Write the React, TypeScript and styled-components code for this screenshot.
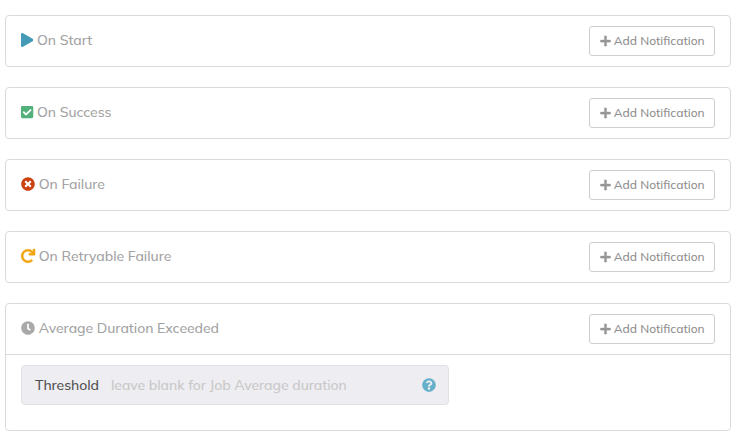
import React from "react";
import styled, { createGlobalStyle } from "styled-components";
import {
  FaPlay,
  FaCheckSquare,
  FaTimesCircle,
  FaRedo,
  FaClock,
  FaPlus,
  FaQuestionCircle,
} from "react-icons/fa";
import type { IconType } from "react-icons";

const GlobalStyle = createGlobalStyle`
  *, *::before, *::after { box-sizing: border-box; }
  body {
    margin: 0;
    background: #fff;
    font-family: Muli, Mulish, Lato, sans-serif;
    font-size: 14px;
    font-weight: 500;
    line-height: 20px;
  }
`;

const Page = styled.main`
  display: flex;
  flex-direction: column;
  gap: 20px;
  width: 740px;
  padding: 15px 9px 17px 5px;
`;

const Panel = styled.section`
  border: 1px solid #dadada;
  border-radius: 4px;
`;

const PanelHeader = styled.header`
  display: flex;
  align-items: center;
  justify-content: space-between;
  height: 50px;
  padding: 0 15px;
`;

const Title = styled.div<{ $color: string; $iconWidth: number; $iconStroke: number }>`
  display: flex;
  align-items: center;
  gap: 3.75px;
  padding-bottom: 2px;
  color: #a3a3a3;
  letter-spacing: -0.04px;
  svg {
    width: ${(p) => p.$iconWidth}px;
    height: 14px;
    color: ${(p) => p.$color};
    stroke: currentColor;
    stroke-width: ${(p) => p.$iconStroke}px;
    overflow: visible;
  }
`;

const Label = styled.span`
  white-space: nowrap;
`;

const AddButton = styled.button`
  display: flex;
  align-items: center;
  gap: 2.75px;
  width: 126px;
  height: 30px;
  padding: 0 0 0 10px;
  border: 1px solid #cfcfca;
  border-radius: 3px;
  background: #fff;
  color: #8f8f8f;
  font: inherit;
  font-size: 12px;
  svg {
    width: 11px;
    height: 12px;
    color: #979797;
    stroke: currentColor;
    stroke-width: 12px;
  }
`;

const PanelBody = styled.div`
  height: 76px;
  padding: 10px 15px;
  border-top: 1px solid #dadada;
`;

const Field = styled.label`
  display: flex;
  align-items: center;
  width: 428px;
  height: 40px;
  padding: 0 12px 0 13px;
  border: 1px solid #e1e1e5;
  border-radius: 4px;
  background: #eeedf2;
  color: #505050;
  svg {
    flex: none;
    width: 14px;
    height: 14px;
    color: #65b1cb;
  }
`;

const FieldName = styled.span`
  width: 76px;
  letter-spacing: -0.08px;
`;

const FieldInput = styled.input`
  flex: 1;
  min-width: 0;
  padding: 0;
  border: 0;
  outline: 0;
  background: transparent;
  font: inherit;
  letter-spacing: -0.05px;
  &::placeholder {
    color: #c8c8c6;
    opacity: 1;
  }
`;

interface Trigger {
  label: string;
  icon: IconType;
  iconWidth: number;
  iconStroke?: number;
  color: string;
  threshold?: boolean;
}

const triggers: Trigger[] = [
  { label: "On Start", icon: FaPlay, iconWidth: 12.25, color: "#439bb5" },
  { label: "On Success", icon: FaCheckSquare, iconWidth: 12.25, color: "#52b07c" },
  { label: "On Failure", icon: FaTimesCircle, iconWidth: 14, color: "#c9420f" },
  { label: "On Retryable Failure", icon: FaRedo, iconWidth: 14, iconStroke: 18, color: "#f0a50f" },
  { label: "Average Duration Exceeded", icon: FaClock, iconWidth: 14, color: "#a9a9a9", threshold: true },
];

export default function App() {
  return (
    <>
      <GlobalStyle />
      <Page>
        {triggers.map(({ label, icon: Icon, iconWidth, iconStroke = 0, color, threshold }) => (
          <Panel key={label}>
            <PanelHeader>
              <Title $color={color} $iconWidth={iconWidth} $iconStroke={iconStroke}>
                <Icon />
                <Label>{label}</Label>
              </Title>
              <AddButton type="button">
                <FaPlus />
                <Label>Add Notification</Label>
              </AddButton>
            </PanelHeader>
            {threshold && (
              <PanelBody>
                <Field>
                  <FieldName>Threshold</FieldName>
                  <FieldInput placeholder="leave blank for Job Average duration" />
                  <FaQuestionCircle />
                </Field>
              </PanelBody>
            )}
          </Panel>
        ))}
      </Page>
    </>
  );
}
